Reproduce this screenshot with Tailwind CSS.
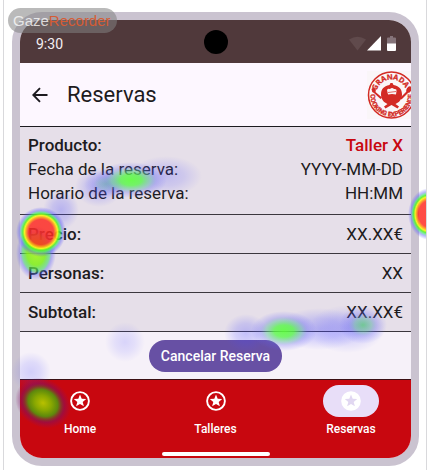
<!DOCTYPE html>
<html lang="es">
<head>
<meta charset="utf-8">
<meta name="viewport" content="width=device-width, initial-scale=1">
<title>Reservas</title>
<script src="https://cdn.jsdelivr.net/npm/@tailwindcss/browser@4"></script>
</head>
<body class="bg-white font-['Roboto','Open_Sans',sans-serif] text-[#1d1b20]">
<div class="relative ml-[3px] mr-1 border-x border-[#d9d9dc] pl-2 pr-[7px] pt-3 pb-1 overflow-hidden">

  <main class="overflow-hidden rounded-[30px] border-8 border-[#cac3d0] bg-[#fdf7ff]">
    <!-- Status bar -->
    <div class="grid h-[43px] grid-cols-3 items-center bg-[#50393b] pl-4 pr-[15px] text-[#f5eff2]">
      <span class="pt-1 text-[14px] leading-5">9:30</span>
      <span class="size-6 justify-self-center rounded-full bg-black"></span>
      <span class="flex items-center justify-end gap-px pt-1">
        <svg class="h-[15px] w-[17px]" viewBox="0 0 17 15" fill="#604a4c" aria-hidden="true"><path d="M0 3.500Q8.500-2 17 3.500L8.500 14.500Z"/></svg>
        <svg class="h-[15px] w-[14px]" viewBox="0 0 14 15" fill="#fff" aria-hidden="true"><path d="M14 0V14.500H0Z"/></svg>
        <svg class="ml-[5px] h-[15px] w-[9px]" viewBox="0 0 9 15" aria-hidden="true"><path d="M3 0h3v1.500h2q1 0 1 1V8H0V2.500q0-1 1-1h2Z" fill="#85747a"/><path d="M0 7.500h9V14q0 1-1 1H1q-1 0-1-1Z" fill="#fff"/></svg>
      </span>
    </div>

    <!-- App bar -->
    <header class="flex h-16 items-center border-b border-[#1d1b20] pl-3">
      <button type="button" aria-label="Volver" class="flex size-4 items-center justify-center">
        <svg class="size-4" viewBox="0 0 16 16" fill="none" stroke="#1d1b20" stroke-width="1.900" aria-hidden="true"><path d="M15.500 8H1.500M8 1.200L1.300 8L8 14.800"/></svg>
      </button>
      <h1 class="ml-[19px] flex-1 text-[22px] leading-7">Reservas</h1>
      <svg class="-mr-1 size-12 shrink-0" viewBox="0 0 48 48" role="img" aria-label="Granada Cooking Experience">
        <rect width="48" height="48" fill="#faf6f9"/>
        <circle cx="24.500" cy="24" r="23" fill="#fbf6f8" stroke="#d32b25" stroke-width="1.500"/>
        <defs>
          <path id="arc-top" d="M9 24A15.500 15.500 0 0 1 40 24"/>
          <path id="arc-bottom" d="M4 20A21 21 0 1 0 45 20"/>
        </defs>
        <g fill="#d32b25" stroke="#d32b25" stroke-width=".3" class="font-bold">
          <text class="font-['Open_Sans','Roboto',sans-serif]" font-size="7.400" text-anchor="middle"><textPath href="#arc-top" startOffset="47%">GRANADA</textPath></text>
          <text class="font-['Roboto',sans-serif]" font-size="6.500" text-anchor="middle"><textPath href="#arc-bottom" startOffset="50%">COOKING EXPERIENCE</textPath></text>
        </g>
        <g fill="#d32b25">
          <path d="M22.500 14l1-2h2l1 2c6 1 8.500 4.500 8.500 9.500c0 5-3 8-6.500 9.500l3.500 2.500-1.500 2-6-3.500-6 3.500-1.500-2 3.500-2.500c-3.500-1.500-6.500-4.500-6.500-9.500c0-5 2.500-8.500 8.500-9.500Z"/>
          <path d="M4.500 18q1.500-2 3.500 0q1.500 1.500 0.500 3l6.500 5.500-1.500 1.500-6.500-6Q4.500 21 4.500 18Z"/>
          <ellipse cx="42" cy="18.500" rx="2.300" ry="3.500" transform="rotate(30 42 18.500)"/>
          <path d="M40 20l1.500 1.500-7 7-1.500-1.500Z"/>
        </g>
        <path d="M20 19q1-2 3-1q2-2 4 0q3-0.500 2.500 2l-0.500 3.500q-4-1-8 0Z" fill="#fbf6f8"/>
        <path d="M21 21.500l8-1" stroke="#d32b25" stroke-width=".7"/>
      </svg>
    </header>

    <!-- Booking details -->
    <dl class="bg-[#e6dfe9] text-[17px] leading-6">
      <div class="border-b border-[#3b373e] px-2 pt-1.5 pb-[9px]">
        <div class="flex justify-between"><dt class="font-medium">Producto:</dt><dd class="font-medium text-[#c8070f]">Taller X</dd></div>
        <div class="flex justify-between"><dt>Fecha de la reserva:</dt><dd>YYYY-MM-DD</dd></div>
        <div class="flex justify-between"><dt>Horario de la reserva:</dt><dd>HH:MM</dd></div>
      </div>
      <div class="flex h-[39px] items-center justify-between border-b border-[#3b373e] px-2"><dt class="font-medium">Precio:</dt><dd>XX.XX€</dd></div>
      <div class="flex h-[39px] items-center justify-between border-b border-[#3b373e] px-2"><dt class="font-medium">Personas:</dt><dd>XX</dd></div>
      <div class="flex h-[39px] items-center justify-between border-b border-[#3b373e] px-2"><dt class="font-medium">Subtotal:</dt><dd>XX.XX€</dd></div>
    </dl>

    <div class="flex justify-center bg-[#f6f1f9] pt-2 pb-[7px]">
      <button type="button" class="h-8 rounded-full bg-[#6750a4] px-3 text-[14px] leading-5 font-medium text-white">Cancelar Reserva</button>
    </div>

    <!-- Bottom navigation -->
    <nav class="border-t border-[#3b1014] bg-[#c8070f] pt-[5px] text-[12px] leading-4 font-medium text-white">
      <div class="flex justify-between px-8">
        <a href="#home" class="flex w-14 flex-col items-center gap-1">
          <span class="flex h-8 w-14 items-center justify-center rounded-full">
            <svg class="size-5" viewBox="0 0 20 20" aria-hidden="true"><circle cx="10" cy="10" r="8.900" fill="none" stroke="#fff" stroke-width="1.900"/><path d="M10 3.500l1.700 4.200 4.500.3-3.500 2.900 1.200 4.400L10 12.900l-3.900 2.400 1.200-4.400L3.800 8l4.500-.3Z" fill="#fff"/></svg>
          </span>
          <span>Home</span>
        </a>
        <a href="#talleres" class="flex w-14 flex-col items-center gap-1">
          <span class="flex h-8 w-14 items-center justify-center rounded-full">
            <svg class="size-5" viewBox="0 0 20 20" aria-hidden="true"><circle cx="10" cy="10" r="8.900" fill="none" stroke="#fff" stroke-width="1.900"/><path d="M10 3.500l1.700 4.200 4.500.3-3.500 2.900 1.200 4.400L10 12.900l-3.900 2.400 1.200-4.400L3.800 8l4.500-.3Z" fill="#fff"/></svg>
          </span>
          <span>Talleres</span>
        </a>
        <a href="#reservas" aria-current="page" class="flex w-14 flex-col items-center gap-1">
          <span class="flex h-8 w-14 items-center justify-center rounded-full bg-[#e8def8]">
            <svg class="size-5" viewBox="0 0 20 20" aria-hidden="true"><circle cx="10" cy="10" r="9.800" fill="#fff"/><path d="M10 3.500l1.700 4.200 4.500.3-3.500 2.900 1.200 4.400L10 12.900l-3.900 2.400 1.200-4.400L3.800 8l4.500-.3Z" fill="#e1d7f1"/></svg>
          </span>
          <span>Reservas</span>
        </a>
      </div>
      <div class="flex justify-center pt-[15px] pb-0.5">
        <span class="h-1 w-[108px] rounded-full bg-white"></span>
      </div>
    </nav>
  </main>

  <!-- Gaze heat map -->
  <svg class="pointer-events-none absolute top-0 left-0 h-[470px] w-full" viewBox="4 0 422 470" aria-hidden="true">
    <defs>
      <radialGradient id="hot">
        <stop offset="0" stop-color="#ff2a22" stop-opacity=".84"/><stop offset=".5" stop-color="#ff2a22" stop-opacity=".84"/>
        <stop offset=".59" stop-color="#ff9a18" stop-opacity=".9"/><stop offset=".66" stop-color="#f6f51c" stop-opacity=".95"/>
        <stop offset=".73" stop-color="#55f22a" stop-opacity=".9"/><stop offset=".8" stop-color="#45d884" stop-opacity=".65"/><stop offset=".87" stop-color="#5555ff" stop-opacity=".4"/>
        <stop offset="1" stop-color="#5555ff" stop-opacity="0"/>
      </radialGradient>
      <radialGradient id="lime">
        <stop offset="0" stop-color="#a5f51c" stop-opacity=".9"/><stop offset=".45" stop-color="#80f01c" stop-opacity=".88"/>
        <stop offset=".68" stop-color="#42d868" stop-opacity=".6"/><stop offset=".8" stop-color="#5555ff" stop-opacity=".35"/><stop offset="1" stop-color="#5555ff" stop-opacity="0"/>
      </radialGradient>
      <radialGradient id="green">
        <stop offset="0" stop-color="#5cff3c" stop-opacity=".9"/><stop offset=".3" stop-color="#58f748" stop-opacity=".8"/>
        <stop offset=".55" stop-color="#62bfa0" stop-opacity=".5"/><stop offset=".72" stop-color="#6060f0" stop-opacity=".25"/><stop offset="1" stop-color="#6060ff" stop-opacity="0"/>
      </radialGradient>
      <radialGradient id="teal">
        <stop offset="0" stop-color="#54c878" stop-opacity=".75"/><stop offset=".35" stop-color="#60b79c" stop-opacity=".5"/>
        <stop offset=".6" stop-color="#6060f0" stop-opacity=".25"/><stop offset="1" stop-color="#6060ff" stop-opacity="0"/>
      </radialGradient>
      <radialGradient id="blue">
        <stop offset="0" stop-color="#4040ff" stop-opacity=".28"/><stop offset=".5" stop-color="#4848ff" stop-opacity=".19"/><stop offset="1" stop-color="#5050ff" stop-opacity="0"/>
      </radialGradient>
      <radialGradient id="faint">
        <stop offset="0" stop-color="#5050ff" stop-opacity=".18"/><stop offset=".5" stop-color="#5050ff" stop-opacity=".11"/><stop offset="1" stop-color="#5050ff" stop-opacity="0"/>
      </radialGradient>
      <radialGradient id="olive">
        <stop offset="0" stop-color="#b8c400" stop-opacity=".98"/><stop offset=".3" stop-color="#85b000" stop-opacity=".95"/>
        <stop offset=".53" stop-color="#509b0c" stop-opacity=".88"/><stop offset=".66" stop-color="#744332" stop-opacity=".75"/><stop offset=".77" stop-color="#7c1265" stop-opacity=".5"/>
        <stop offset="1" stop-color="#8c1068" stop-opacity="0"/>
      </radialGradient>
    </defs>
    <ellipse cx="99" cy="187" rx="24" ry="20" fill="url(#blue)"/>
    <ellipse cx="106" cy="184" rx="22" ry="14" fill="url(#teal)" opacity=".6"/>
    <ellipse cx="166" cy="176" rx="36" ry="20" fill="url(#blue)" opacity=".8"/>
    <ellipse cx="131" cy="180" rx="36" ry="18" fill="url(#green)"/>
    <ellipse cx="61" cy="210" rx="18" ry="20" fill="url(#blue)"/>
    <ellipse cx="36" cy="253" rx="20" ry="27" fill="url(#lime)"/>
    <circle cx="41" cy="232" r="25" fill="url(#hot)"/>
    <ellipse cx="429" cy="214" rx="21" ry="26" fill="url(#hot)"/>
    <circle cx="125" cy="342" r="20" fill="url(#faint)"/>
    <circle cx="31" cy="372" r="20" fill="url(#blue)" opacity=".7"/>
    <ellipse cx="246" cy="333" rx="22" ry="19" fill="url(#blue)"/>
    <ellipse cx="320" cy="329" rx="44" ry="21" fill="url(#blue)"/>
    <ellipse cx="347" cy="329" rx="38" ry="24" fill="url(#blue)" opacity=".8"/>
    <ellipse cx="284" cy="331" rx="33" ry="20" fill="url(#green)"/>
    <ellipse cx="363" cy="325" rx="24" ry="19" fill="url(#teal)"/>
    <ellipse cx="43" cy="403" rx="29" ry="24" fill="url(#olive)" transform="rotate(30 43 403)"/>
  </svg>

  <!-- Recorder watermark -->
  <div class="absolute top-2 left-1 flex h-[25px] items-center rounded-full bg-[#828282]/55 pl-[5px] pr-1.5 font-['Liberation_Sans',Arial,sans-serif] text-[15px] leading-5 text-white/75">Gaze<span class="text-[#d55c35]">Recorder</span></div>
</div>
</body>
</html>
